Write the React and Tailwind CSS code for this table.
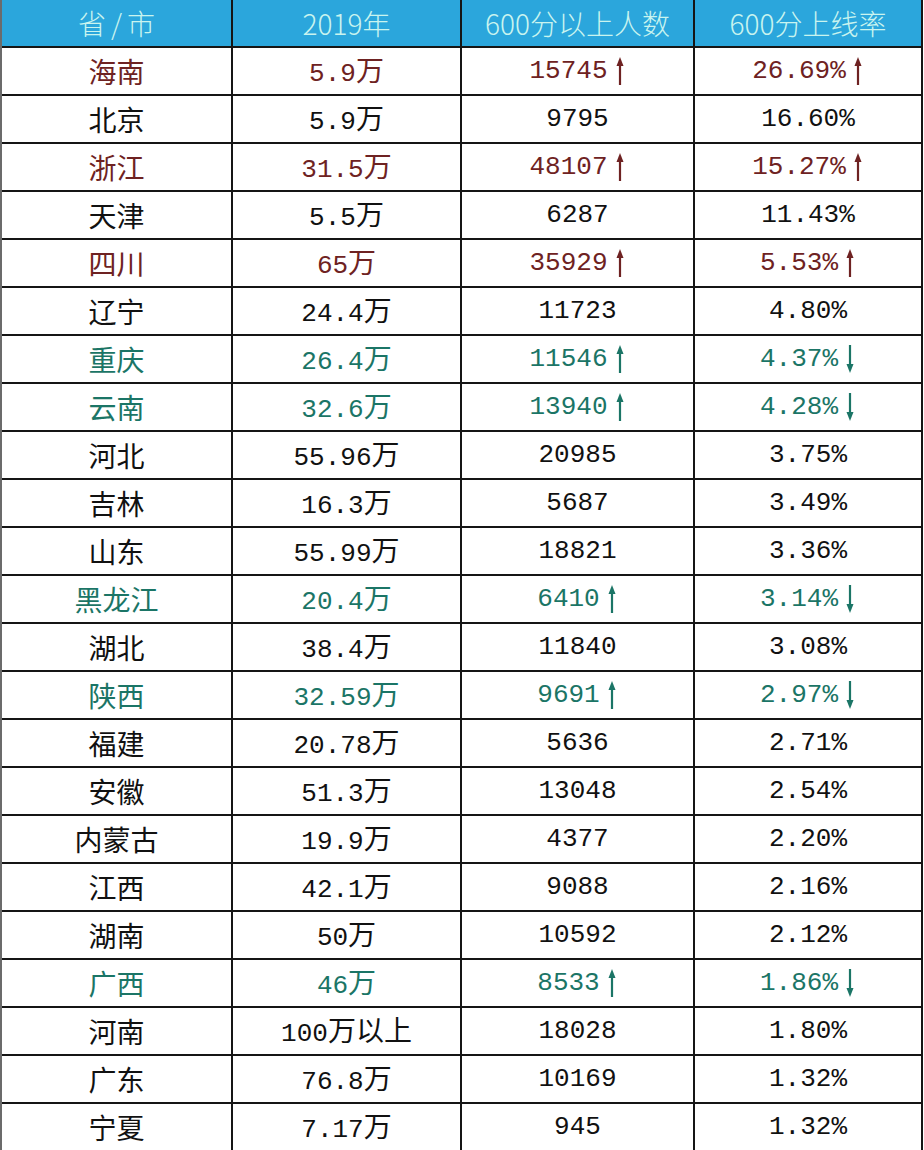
import React from "react";

const rows = [
  ["海南", "5.9万", "15745", "26.69%", "r"],
  ["北京", "5.9万", "9795", "16.60%", ""],
  ["浙江", "31.5万", "48107", "15.27%", "r"],
  ["天津", "5.5万", "6287", "11.43%", ""],
  ["四川", "65万", "35929", "5.53%", "r"],
  ["辽宁", "24.4万", "11723", "4.80%", ""],
  ["重庆", "26.4万", "11546", "4.37%", "g"],
  ["云南", "32.6万", "13940", "4.28%", "g"],
  ["河北", "55.96万", "20985", "3.75%", ""],
  ["吉林", "16.3万", "5687", "3.49%", ""],
  ["山东", "55.99万", "18821", "3.36%", ""],
  ["黑龙江", "20.4万", "6410", "3.14%", "g"],
  ["湖北", "38.4万", "11840", "3.08%", ""],
  ["陕西", "32.59万", "9691", "2.97%", "g"],
  ["福建", "20.78万", "5636", "2.71%", ""],
  ["安徽", "51.3万", "13048", "2.54%", ""],
  ["内蒙古", "19.9万", "4377", "2.20%", ""],
  ["江西", "42.1万", "9088", "2.16%", ""],
  ["湖南", "50万", "10592", "2.12%", ""],
  ["广西", "46万", "8533", "1.86%", "g"],
  ["河南", "100万以上", "18028", "1.80%", ""],
  ["广东", "76.8万", "10169", "1.32%", ""],
  ["宁夏", "7.17万", "945", "1.32%", ""],
];

function Mixed({ text }) {
  const parts = text.match(/[\u4e00-\u9fff]+|[^\u4e00-\u9fff]+/g) || [];
  return (
    <span className="inline-flex items-baseline">
      {parts.map((p, i) =>
        /[\u4e00-\u9fff]/.test(p) ? (
          <span key={i} className="text-[28px] [font-family:'Noto_Sans_CJK_SC',sans-serif]">
            {p}
          </span>
        ) : (
          <span key={i} className="text-[26px] [font-family:'Liberation_Mono',monospace]">
            {p}
          </span>
        )
      )}
    </span>
  );
}

function Arrow({ dir }) {
  return (
    <svg width="12" height="28" viewBox="0 0 12 28" className="ml-[6px] shrink-0">
      {dir === "up" ? (
        <>
          <line x1="6" y1="6" x2="6" y2="28" stroke="currentColor" strokeWidth="2.2" />
          <path d="M6 0 L9.5 9 L2.5 9 Z" fill="currentColor" />
        </>
      ) : (
        <>
          <line x1="6" y1="0" x2="6" y2="22" stroke="currentColor" strokeWidth="2.2" />
          <path d="M6 28 L9.5 19 L2.5 19 Z" fill="currentColor" />
        </>
      )}
    </svg>
  );
}

const cell = "flex items-center justify-center h-[46px] border-r-2 border-[#151515]";

export default function App() {
  return (
    <div className="w-[924px] h-[1150px] overflow-hidden bg-white">
      <div className="w-[923px] border-l-2 border-[#6b6b6b]">
        <div className="grid grid-cols-[231px_229px_233px_228px] bg-[#2ba6dc] border-b-2 border-[#151515] text-[#c9f4ef] text-[28px] [font-family:'Noto_Sans_CJK_SC',sans-serif] font-light">
          <div className={cell}>省<span className="mx-[5px]">/</span>市</div>
          <div className={cell}>2019年</div>
          <div className={cell}>600分以上人数</div>
          <div className={cell}>600分上线率</div>
        </div>
        {rows.map(([p, n, c, r, t], i) => {
          const color =
            t === "r" ? "text-[#6e2222]" : t === "g" ? "text-[#1b7566]" : "text-[#111111]";
          return (
            <div
              key={i}
              className={`grid grid-cols-[231px_229px_233px_228px] border-b-2 border-[#151515] ${color}`}
            >
              <div className={cell}>
                <Mixed text={p} />
              </div>
              <div className={cell}>
                <Mixed text={n} />
              </div>
              <div className={cell}>
                <Mixed text={c} />
                {t && <Arrow dir="up" />}
              </div>
              <div className={cell}>
                <Mixed text={r} />
                {t === "r" && <Arrow dir="up" />}
                {t === "g" && <Arrow dir="down" />}
              </div>
            </div>
          );
        })}
      </div>
    </div>
  );
}
